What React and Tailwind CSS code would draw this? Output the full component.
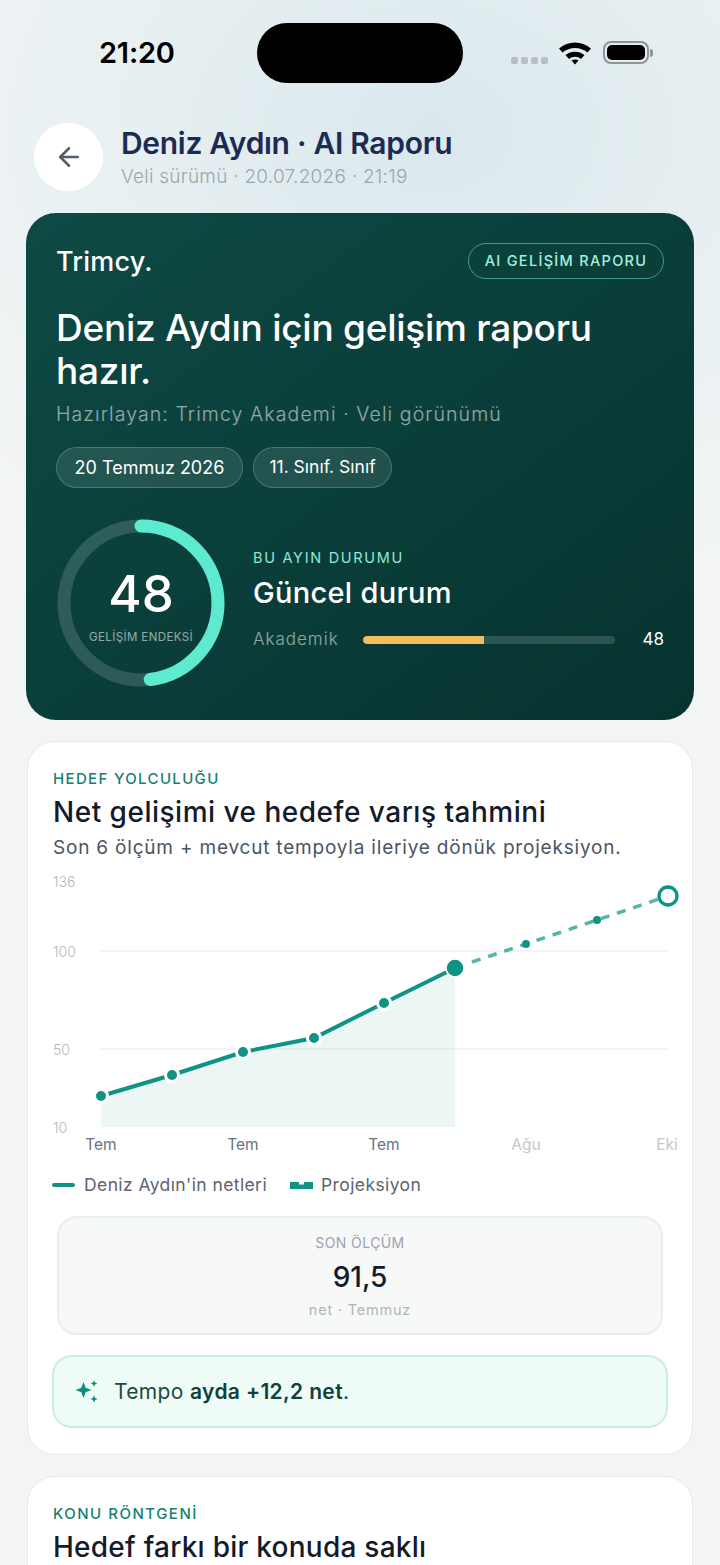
import { ArrowLeft } from 'lucide-react';

const past = [
  [101, 1095],
  [172, 1074],
  [243, 1051],
  [314, 1037],
  [384, 1002],
];

function StatusBar() {
  return (
    <div className="relative h-[123px] shrink-0">
      <span className="absolute left-[99px] top-[36px] text-[29px] leading-[34px] font-semibold text-black font-['Inter',sans-serif] tracking-[-0.2px]">
        21:20
      </span>
      <div className="absolute left-[257px] top-[23px] w-[206px] h-[60px] rounded-full bg-black" />
      <div className="absolute left-[511px] top-[57px] flex gap-[3px]">
        {[0, 1, 2, 3].map((i) => (
          <span key={i} className="w-[7px] h-[7px] rounded-[2px] bg-[#b9bec1]" />
        ))}
      </div>
      <svg className="absolute left-[558px] top-[40px]" width="34" height="25" viewBox="0 0 34 25">
        <path d="M1 8.5C10 0.5 24 0.5 33 8.5L29.5 12.5C22.5 6.5 11.5 6.5 4.5 12.5Z" fill="#000" />
        <path d="M7.5 15C13 10.5 21 10.5 26.5 15L23 19C19.5 16 14.5 16 11 19Z" fill="#000" />
        <path d="M13.5 20.5C15.5 19 18.5 19 20.5 20.5L17 24.5Z" fill="#000" />
      </svg>
      <div className="absolute left-[603px] top-[41px] w-[46px] h-[23px] rounded-[8px] border-2 border-[#8f9497] p-[2px]">
        <div className="w-full h-full rounded-[5px] bg-black" />
      </div>
      <div className="absolute left-[650px] top-[49px] w-[3px] h-[8px] rounded-r-full bg-[#8f9497]" />
    </div>
  );
}

function HeroCard() {
  return (
    <section className="h-[507px] rounded-[30px] bg-gradient-to-br from-[#0e4a45] to-[#07332f] pl-[30px] pr-[30px] pt-[30px] text-white">
      <div className="flex items-center justify-between h-[36px]">
        <span className="pt-[2px] text-[27px] font-medium tracking-[0.2px]">Trimcy.</span>
        <span className="h-[36px] w-[196px] flex items-center justify-center rounded-full border border-[#5fd6bd]/60 text-[14.5px] tracking-[1.3px] font-medium text-[#a5f0de]">
          AI GELİŞİM RAPORU
        </span>
      </div>
      <h1 className="mt-[27px] text-[37px] leading-[43px] font-medium tracking-[-0.25px]">
        Deniz Aydın için gelişim raporu hazır.
      </h1>
      <p className="mt-[8px] text-[19.5px] leading-[28px] font-light text-white/55 tracking-[1.1px]">
        Hazırlayan: Trimcy Akademi · Veli görünümü
      </p>
      <div className="mt-[19px] flex gap-[10px]">
        <span className="h-[41px] w-[187px] flex items-center justify-center rounded-full border border-white/20 bg-white/10 text-[18px]">
          20 Temmuz 2026
        </span>
        <span className="h-[41px] w-[139px] flex items-center justify-center rounded-full border border-white/20 bg-white/10 text-[17.5px]">
          11. Sınıf. Sınıf
        </span>
      </div>
      <div className="mt-[31px] ml-[1px] flex">
        <div className="relative w-[168px] h-[168px] shrink-0">
          <svg width="168" height="168" viewBox="0 0 168 168">
            <circle cx="84" cy="84" r="77" fill="none" stroke="#ffffff" strokeOpacity="0.15" strokeWidth="13" />
            <circle
              cx="84"
              cy="84"
              r="77"
              fill="none"
              stroke="#5eead0"
              strokeWidth="13"
              strokeLinecap="round"
              strokeDasharray="232.2 483.8"
              transform="rotate(-90 84 84)"
            />
          </svg>
          <div className="absolute inset-0 flex flex-col items-center pt-[46px]">
            <span className="text-[51px] leading-[58px] font-medium">48</span>
            <span className="mt-[7px] text-[11.5px] leading-[14px] tracking-[0.4px] text-white/55">GELİŞİM ENDEKSİ</span>
          </div>
        </div>
        <div className="ml-[28px] flex-1 pt-[29px]">
          <div className="text-[14.5px] leading-[20px] tracking-[1.7px] text-[#8ee8d4]">BU AYIN DURUMU</div>
          <div className="mt-[5px] text-[29px] leading-[40px] font-medium tracking-[0.3px]">Güncel durum</div>
          <div className="mt-[15px] flex items-center h-[24px]">
            <span className="w-[110px] text-[17px] font-light tracking-[1px] text-white/55">Akademik</span>
            <div className="w-[252px] h-[8px] rounded-full bg-white/15 overflow-hidden">
              <div className="h-full rounded-l-full bg-[#f4bd5c]" style={{ width: '48%' }} />
            </div>
            <span className="ml-auto text-[17px]">48</span>
          </div>
        </div>
      </div>
    </section>
  );
}

function Chart() {
  return (
    <svg className="block mt-[10px] -ml-[1px]" width="666" height="290" viewBox="27 870 666 290">
      <line x1="101" y1="950" x2="668" y2="950" stroke="#eef1f1" strokeWidth="1.5" />
      <line x1="101" y1="1048" x2="668" y2="1048" stroke="#eef1f1" strokeWidth="1.5" />
      <path d="M101 1095L172 1074L243 1051L314 1037L384 1002L455 967V1126H101Z" fill="#0f9484" fillOpacity="0.08" />
      <path d="M101 1095L172 1074L243 1051L314 1037L384 1002L455 967" fill="none" stroke="#0f9484" strokeWidth="4" />
      <path d="M472 961L526 943L597 919L668 895" fill="none" stroke="#0f9484" strokeOpacity="0.7" strokeWidth="3.5" strokeDasharray="9 8" />
      {past.map(([x, y]) => (
        <circle key={x} cx={x} cy={y} r="6.5" fill="#0f9484" stroke="#ffffff" strokeWidth="3" />
      ))}
      <circle cx="455" cy="967" r="9" fill="#0f9484" stroke="#ffffff" strokeWidth="1.5" />
      <circle cx="526" cy="943" r="4" fill="#0f9484" />
      <circle cx="597" cy="919" r="4" fill="#0f9484" />
      <circle cx="668" cy="895" r="9" fill="#ffffff" stroke="#0f9484" strokeWidth="3.3" />
      <g fontSize="14" fill="#b5b9bd" fontWeight="300">
        <text x="53" y="886">136</text>
        <text x="53" y="956">100</text>
        <text x="53" y="1054">50</text>
        <text x="53" y="1132">10</text>
      </g>
      <g fontSize="15.5" textAnchor="middle">
        <text x="101" y="1149" fill="#6b7280">Tem</text>
        <text x="243" y="1149" fill="#6b7280">Tem</text>
        <text x="384" y="1149" fill="#6b7280">Tem</text>
        <text x="526" y="1149" fill="#c4c7cb">Ağu</text>
        <text x="667" y="1149" fill="#c4c7cb">Eki</text>
      </g>
    </svg>
  );
}

function SparkIcon() {
  return (
    <svg width="26" height="26" viewBox="0 0 26 26" fill="#0f8d7e">
      <path d="M9.5 3L11.7 8.8L17.5 11L11.7 13.2L9.5 19L7.3 13.2L1.5 11L7.3 8.8Z" />
      <path d="M20 1.2L21 3.5L23.3 4.5L21 5.5L20 7.8L19 5.5L16.7 4.5L19 3.5Z" />
      <path d="M20 16.3L21.1 18.9L23.7 20L21.1 21.1L20 23.7L18.9 21.1L16.3 20L18.9 18.9Z" />
    </svg>
  );
}

function LegendDash() {
  return (
    <svg className="ml-[23px]" width="23" height="7" viewBox="0 0 23 7" fill="#0f9484">
      <path d="M0 0H9V2.5H14V0H23V7H0Z" />
    </svg>
  );
}

function JourneyCard() {
  return (
    <section className="mt-[21px] mx-[1px] h-[714px] rounded-[28px] border border-[#e6eaea] bg-white">
      <div className="px-[25px] pt-[27px]">
        <div className="text-[15px] leading-[20px] tracking-[1.35px] font-medium text-[#157f70]">HEDEF YOLCULUĞU</div>
        <h2 className="mt-[5px] text-[28px] leading-[36px] font-medium tracking-[0.5px] text-[#141a2a]">Net gelişimi ve hedefe varış tahmini</h2>
        <p className="mt-[5px] text-[19px] leading-[26px] tracking-[0.8px] text-[#4b5563]">
          Son 6 ölçüm + mevcut tempoyla ileriye dönük projeksiyon.
        </p>
      </div>
      <Chart />
      <div className="pl-[24px] mt-[11px] flex items-center h-[26px] text-[17.5px] tracking-[0.4px] text-[#5b6470]">
        <span className="w-[23px] h-[4px] bg-[#0f9484] rounded-full" />
        <span className="ml-[9px]">Deniz Aydın'in netleri</span>
        <LegendDash />
        <span className="ml-[8px]">Projeksiyon</span>
      </div>
      <div className="mx-[29px] mt-[18px] h-[119px] rounded-[20px] border-2 border-[#eaeded] bg-[#f7f8f8] flex flex-col items-center pt-[15px]">
        <span className="text-[14px] leading-[20px] tracking-[0.4px] text-[#9ca3af]">SON ÖLÇÜM</span>
        <span className="mt-[6px] text-[28px] leading-[36px] font-medium text-[#141a2a]">91,5</span>
        <span className="mt-[5px] text-[14.5px] leading-[20px] tracking-[0.8px] text-[#b0b5ba]">net · Temmuz</span>
      </div>
      <div className="mx-[24px] mt-[20px] h-[73px] rounded-[20px] border-2 border-[#c9eee2] bg-[#effbf7] flex items-center pl-[20px]">
        <SparkIcon />
        <span className="ml-[14px] text-[21px] tracking-[0.35px] text-[#1d4a44]">
          Tempo <span className="font-semibold text-[#10403a]">ayda +12,2 net</span>.
        </span>
      </div>
    </section>
  );
}

export default function App() {
  return (
    <div className="relative h-[1565px] w-[720px] overflow-hidden bg-[#f3f5f5] bg-[radial-gradient(ellipse_620px_480px_at_60%_130px,#dae8ee_0%,#e6eff1_45%,#f3f5f5_100%)] font-['Inter',sans-serif]">
      <StatusBar />
      <div className="px-[26px]">
        <header className="flex h-[90px] pl-[8px]">
          <div className="w-[69px] h-[68px] shrink-0 rounded-full bg-white flex items-center justify-center">
            <ArrowLeft size={30} strokeWidth={2} className="text-[#555e68]" />
          </div>
          <div className="ml-[18px]">
            <div className="text-[30px] leading-[40px] font-semibold tracking-[-0.3px] text-[#1c2b52]">Deniz Aydın · AI Raporu</div>
            <div className="mt-[1px] text-[19px] leading-[26px] tracking-[0.25px] font-light text-[#9ea6ab]">Veli sürümü · 20.07.2026 · 21:19</div>
          </div>
        </header>
        <HeroCard />
        <JourneyCard />
        <section className="mt-[21px] mx-[1px] h-[200px] rounded-[28px] border border-[#e6eaea] bg-white px-[25px] pt-[27px]">
          <div className="text-[15px] leading-[20px] tracking-[1.5px] font-medium text-[#157f70]">KONU RÖNTGENİ</div>
          <h2 className="mt-[5px] text-[28px] leading-[36px] font-medium tracking-[0.25px] text-[#141a2a]">Hedef farkı bir konuda saklı</h2>
        </section>
      </div>
    </div>
  );
}
